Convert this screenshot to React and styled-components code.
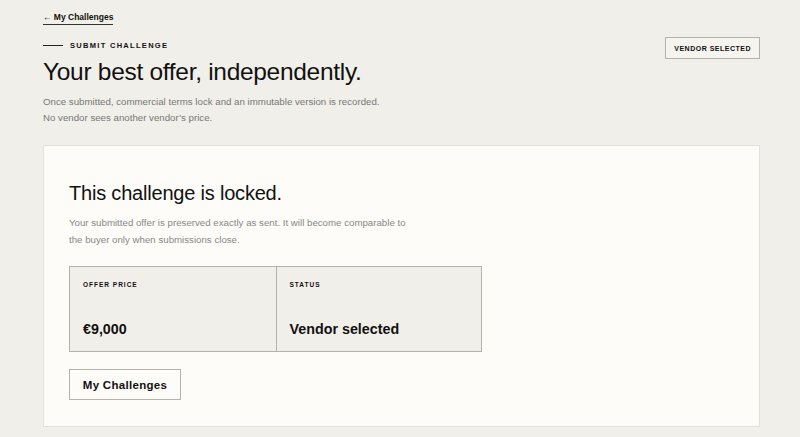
import React from "react";
import styled, { createGlobalStyle } from "styled-components";

const GlobalStyle = createGlobalStyle`
  html, body { margin: 0; padding: 0; background: #f1efe9; }
  body { font-family: "Liberation Sans", Arial, sans-serif; color: #111; }
`;

function App() {
  return (
    <Page>
      <GlobalStyle />
      <BackLink href="#">← My Challenges</BackLink>
      <Header>
        <div>
          <Eyebrow>Submit Challenge</Eyebrow>
          <Title>Your best offer, independently.</Title>
          <Lead>
            Once submitted, commercial terms lock and an immutable version is recorded.
            <br />
            No vendor sees another vendor’s price.
          </Lead>
        </div>
        <Badge>Vendor Selected</Badge>
      </Header>
      <Card>
        <CardTitle>This challenge is locked.</CardTitle>
        <CardText>
          Your submitted offer is preserved exactly as sent. It will become comparable to
          the buyer only when submissions close.
        </CardText>
        <Stats>
          <Stat>
            <StatLabel>Offer Price</StatLabel>
            <StatValue>€9,000</StatValue>
          </Stat>
          <Stat>
            <StatLabel>Status</StatLabel>
            <StatValue>Vendor selected</StatValue>
          </Stat>
        </Stats>
        <Button>My Challenges</Button>
      </Card>
    </Page>
  );
}

const Page = styled.div`
  padding: 12px 40px 0 43px;
  display: flex;
  flex-direction: column;
  align-items: flex-start;
`
const BackLink = styled.a`
  font-size: 8.5px; font-weight: bold;
  color: #111; text-decoration: none;
  border-bottom: 1px solid #333;
  padding-bottom: 2px;
`
const Header = styled.div`
  display: flex;
  justify-content: space-between;
  align-items: flex-start;
  width: 100%;
  margin-top: 16px;
`
const Eyebrow = styled.div`
  display: flex; align-items: center;
  font-size: 7.5px; font-weight: bold;
  letter-spacing: 1.3px; text-transform: uppercase;
  &::before {
    content: ""; width: 20px; height: 1px;
    background: #222; margin-right: 7px;
  }
`
const Title = styled.h1`
  font-size: 24.5px; font-weight: normal;
  margin: 8px 0 0; letter-spacing: -0.3px;
`
const Lead = styled.p`
  font-size: 9.7px; line-height: 16px;
  color: #777; margin: 8px 0 0;
`
const Badge = styled.div`
  margin-top: -4px;
  border: 1px solid #b5b2ab;
  background: #f6f4ef;
  padding: 7px 8px 6px;
  font-size: 7px; font-weight: bold;
  letter-spacing: 0.5px; text-transform: uppercase;
`
const Card = styled.div`
  box-sizing: border-box;
  width: 100%;
  margin-top: 19px;
  background: #fdfcf8;
  border: 1px solid #e4e1d9;
  padding: 36px 25px 25px;
  height: 282px;
`
const CardTitle = styled.h2`
  font-size: 20px; font-weight: normal;
  margin: 0; letter-spacing: -0.2px;
`
const CardText = styled.p`
  font-size: 9.7px; line-height: 17px;
  color: #888; margin: 9px 0 0;
  max-width: 342px;
`
const Stats = styled.div`
  display: grid;
  grid-template-columns: 1fr 1fr;
  box-sizing: border-box;
  width: 413px;
  margin-top: 18px;
  border: 1px solid #b5b2ab;
  background: #f1efe9;
`
const Stat = styled.div`
  height: 84px;
  padding: 14px 13px 0;
  box-sizing: border-box;
  & + & { border-left: 1px solid #b5b2ab; }
`
const StatLabel = styled.div`
  font-size: 6.5px; font-weight: bold;
  letter-spacing: 1px; text-transform: uppercase;
`
const StatValue = styled.div`
  font-size: 14.3px; font-weight: bold;
  margin-top: 33px;
`
const Button = styled.button`
  margin-top: 17px;
  width: 112px; height: 31px;
  background: #fdfcf8;
  border: 1px solid #b5b2ab;
  font-family: inherit;
  font-size: 11.5px; font-weight: bold;
  letter-spacing: 0.3px;
  color: #111;
  cursor: pointer;
`

export default App;
